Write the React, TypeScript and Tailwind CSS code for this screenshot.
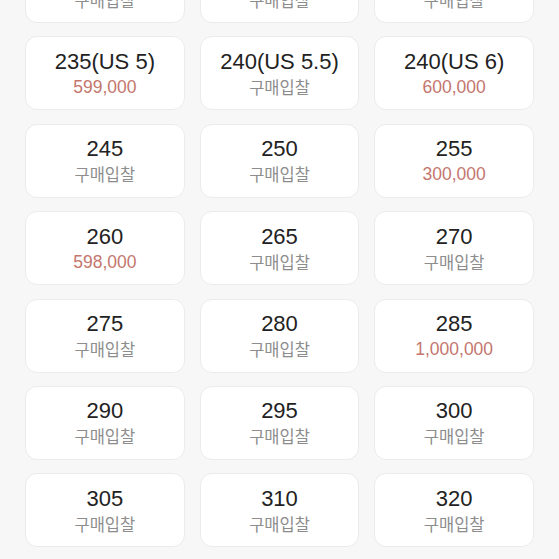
type Size = { label: string; price?: string };

const SIZES: Size[] = [
  { label: "220" },
  { label: "225" },
  { label: "230" },
  { label: "235(US 5)", price: "599,000" },
  { label: "240(US 5.5)" },
  { label: "240(US 6)", price: "600,000" },
  { label: "245" },
  { label: "250" },
  { label: "255", price: "300,000" },
  { label: "260", price: "598,000" },
  { label: "265" },
  { label: "270" },
  { label: "275" },
  { label: "280" },
  { label: "285", price: "1,000,000" },
  { label: "290" },
  { label: "295" },
  { label: "300" },
  { label: "305" },
  { label: "310" },
  { label: "320" },
];

function SizeCard({ size }: { size: Size }) {
  return (
    <button
      type="button"
      className="flex h-[74px] flex-col items-center justify-center gap-px rounded-xl border border-[#ebebeb] bg-white"
    >
      <span className="text-[22px] leading-[26px] text-[#222222]">{size.label}</span>
      {size.price ? (
        <span className="text-[17.5px] leading-[22px] text-[#c4766e]">{size.price}</span>
      ) : (
        <span className="font-['Noto_Sans_CJK_KR'] text-[16.5px] leading-[22px] text-[#8d8d8d]">
          구매입찰
        </span>
      )}
    </button>
  );
}

export default function App() {
  return (
    <div className="h-[559px] overflow-hidden bg-[#f7f7f7] font-['Liberation_Sans','Noto_Sans_CJK_KR',sans-serif]">
      <div className="-mt-[51px] grid grid-cols-3 gap-x-[15px] gap-y-[13.4px] px-[25px]">
        {SIZES.map((size) => (
          <SizeCard key={size.label} size={size} />
        ))}
      </div>
    </div>
  );
}
